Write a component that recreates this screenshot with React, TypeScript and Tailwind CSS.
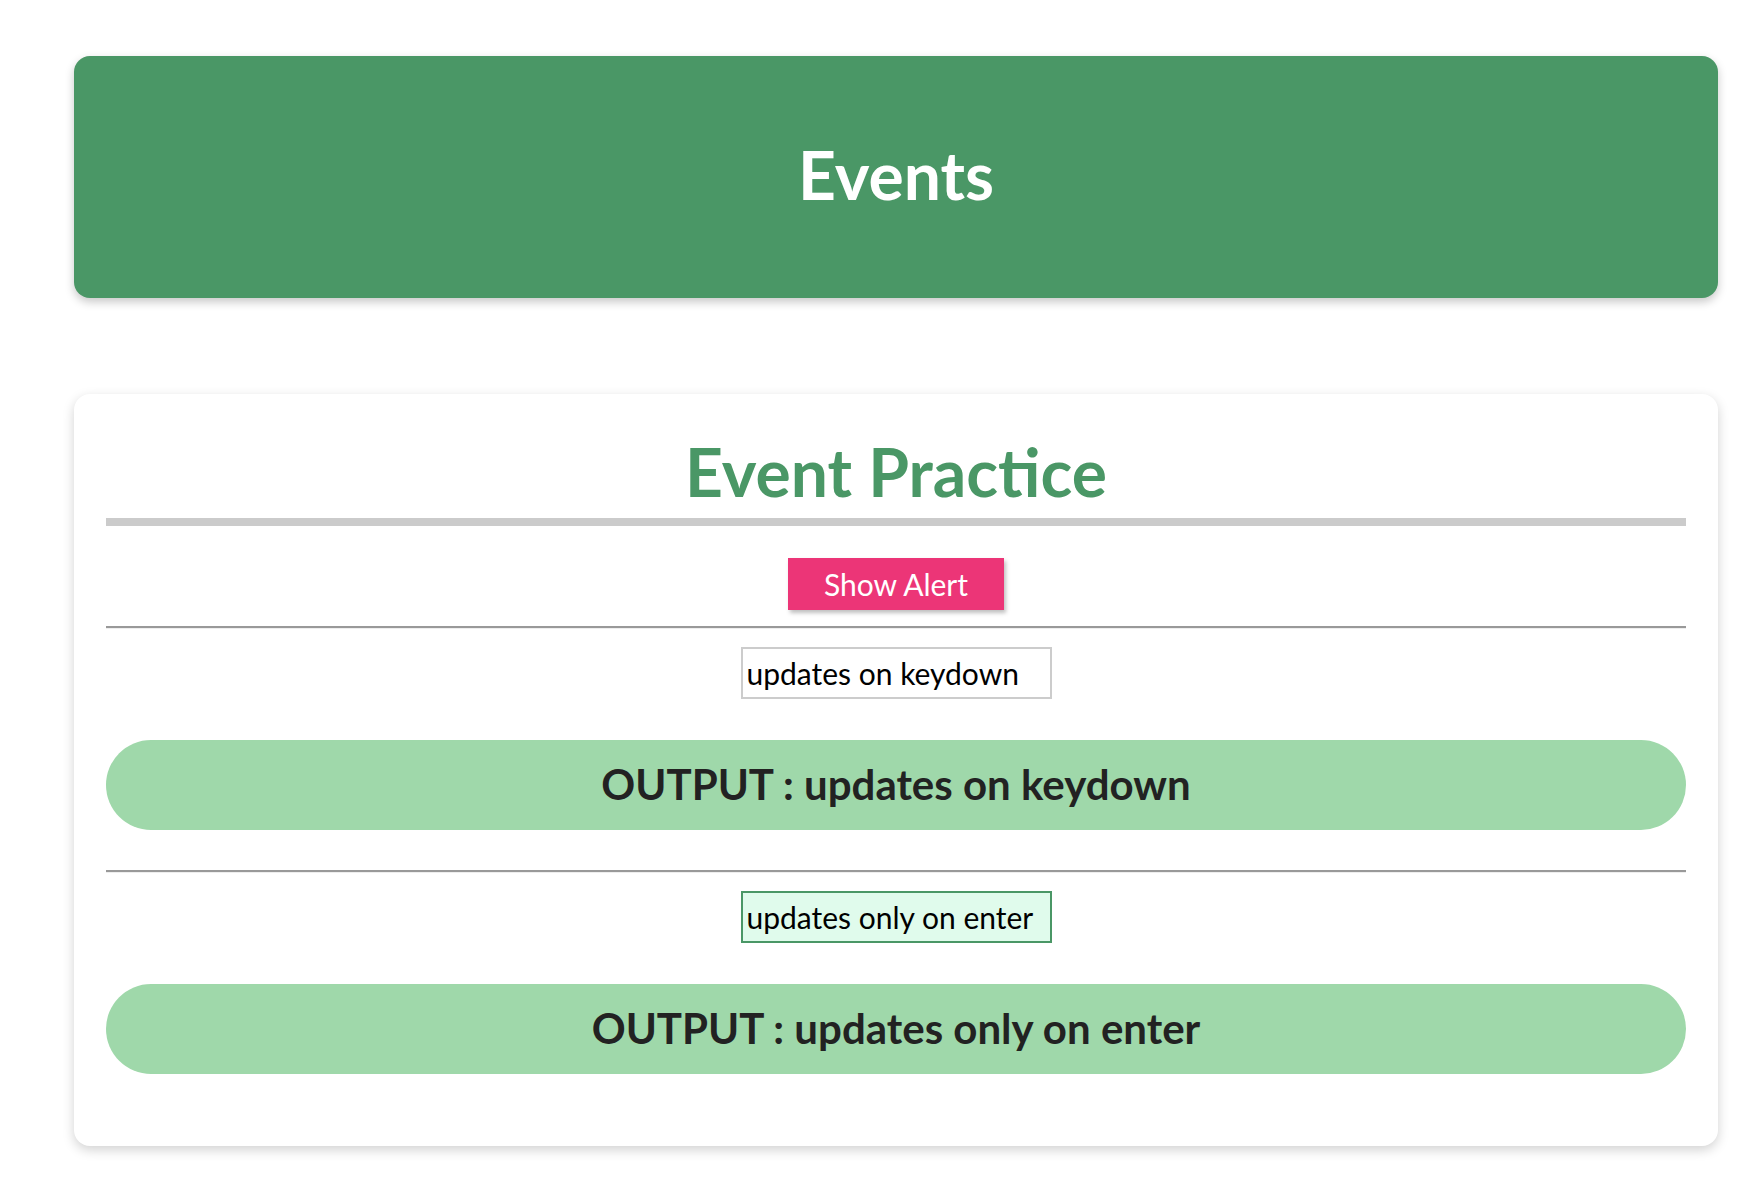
import React, { useState } from "react";

export default function App() {
  const [keyText, setKeyText] = useState("updates on keydown");
  const [enterDraft, setEnterDraft] = useState("updates only on enter");
  const [enterText, setEnterText] = useState("updates only on enter");

  return (
    <div className="min-h-[1188px] w-full bg-white pt-[56px] font-['Lato',_'Noto_Sans',_sans-serif]">
      <div className="ml-[74px] w-[1644px]">
        <header className="h-[242px] rounded-[16px] bg-[#4a9766] text-center leading-[238px] text-white shadow-[0_4px_10px_rgba(0,0,0,0.22)]">
          <h1 className="text-[66px] font-bold">Events</h1>
        </header>

        <main className="mt-[96px] rounded-[16px] bg-white px-[32px] pt-[32px] pb-[72px] shadow-[0_4px_12px_rgba(0,0,0,0.18)]">
          <h2 className="h-[92px] text-center text-[66px] font-bold leading-[92px] text-[#4a9766]">
            Event Practice
          </h2>
          <div className="h-[8px] bg-[#cbcbcb]" />

          <div className="mt-[32px] flex justify-center">
            <button
              type="button"
              onClick={() => {}}
              className="h-[52px] w-[216px] bg-[#ec3577] text-[30px] leading-[52px] text-white shadow-[2px_3px_4px_rgba(0,0,0,0.25)]"
            >
              Show Alert
            </button>
          </div>

          <div className="mt-[16px] border-t-2 border-b border-t-[#999999] border-b-[#eeeeee]" />

          <div className="mt-[18px] flex justify-center">
            <input
              value={keyText}
              onChange={(e) => setKeyText(e.target.value)}
              className="h-[52px] w-[311px] border-2 border-[#cccccc] bg-white px-[4px] text-[30px] leading-[48px] text-black outline-none"
            />
          </div>

          <div className="mt-[41px] h-[90px] rounded-full bg-[#9fd8aa] text-center text-[42px] font-bold leading-[88px] text-[#222222]">
            OUTPUT : {keyText}
          </div>

          <div className="mt-[40px] border-t-2 border-b border-t-[#999999] border-b-[#eeeeee]" />

          <div className="mt-[18px] flex justify-center">
            <input
              value={enterDraft}
              onChange={(e) => setEnterDraft(e.target.value)}
              onKeyDown={(e) => {
                if (e.key === "Enter") setEnterText(enterDraft);
              }}
              className="h-[52px] w-[311px] border-2 border-[#4a9766] bg-[#e0fbec] px-[4px] text-[30px] leading-[48px] text-black outline-none"
            />
          </div>

          <div className="mt-[41px] h-[90px] rounded-full bg-[#9fd8aa] text-center text-[42px] font-bold leading-[88px] text-[#222222]">
            OUTPUT : {enterText}
          </div>
        </main>
      </div>
    </div>
  );
}
